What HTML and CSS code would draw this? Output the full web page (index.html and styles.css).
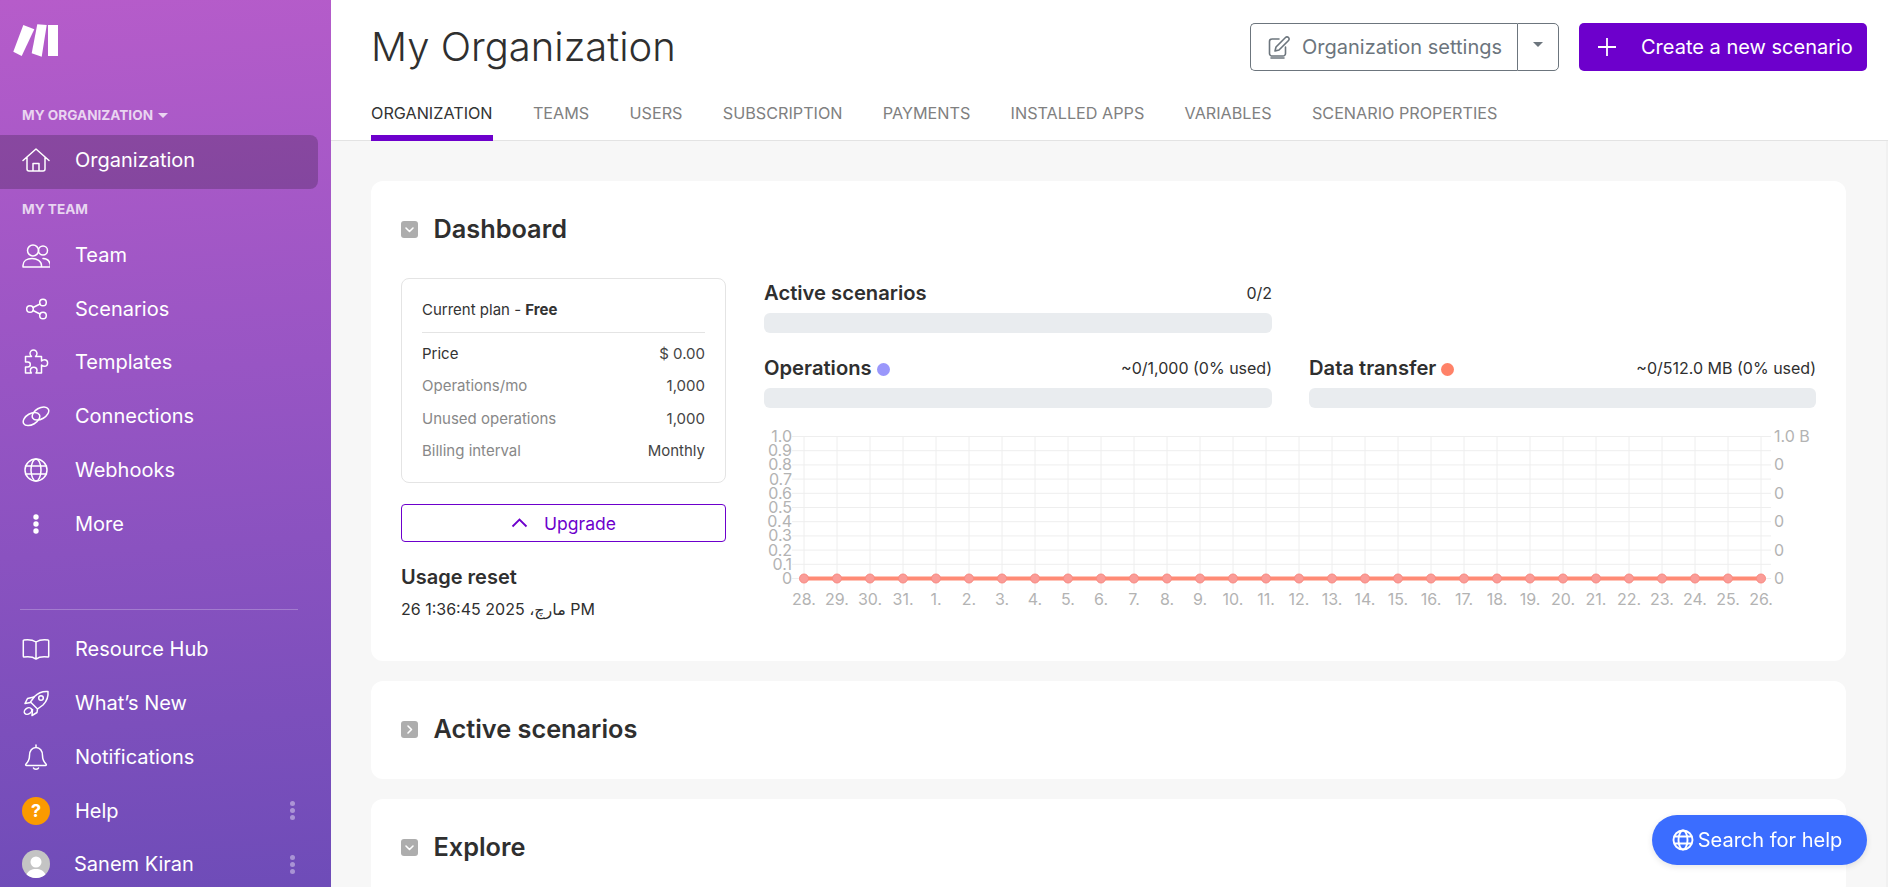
FILE: index.html
```html
<!DOCTYPE html>
<html lang="en">
<head>
  <meta charset="UTF-8" />
  <meta name="viewport" content="width=device-width, initial-scale=1.0"/>
  <title>My Organization</title>
  <link rel="stylesheet" href="styles.css">
</head>
<body>
  <aside class="sidebar">
    <div class="logo">
      <svg width="46" height="34" viewBox="0 0 46 34">
        <polygon points="0.3,27.7 10.3,1 21.3,5.3 8.7,32" />
        <polygon points="18.7,29.3 24.3,0.3 33.7,1 28.7,32.7" />
        <rect x="35" y="1" width="10" height="31" />
      </svg>
    </div>

    <div class="side-label">MY ORGANIZATION <span class="side-caret"></span></div>
    <a class="nav-item active">
      <svg class="nav-icon" viewBox="0 0 28 28"><path d="M1 14.5 14 3l13 11.5M5 11.5V23a2 2 0 0 0 2 2h14a2 2 0 0 0 2-2V11.5M11 25v-7.5h6V25"/></svg>
      <span>Organization</span>
    </a>

    <div class="side-label team-label">MY TEAM</div>
    <a class="nav-item">
      <svg class="nav-icon" viewBox="0 0 28 28"><circle cx="11" cy="9.5" r="5.5"/><circle cx="21" cy="9.5" r="4.5"/><path d="M1 26v-1.5c0-4.5 4-7 9-7s9.5 2.5 9.5 7V26zM21 17.5c4 0 7.3 2.7 7.5 8.5h-9"/></svg>
      <span>Team</span>
    </a>
    <a class="nav-item">
      <svg class="nav-icon" viewBox="0 0 28 28"><circle cx="8" cy="14" r="3.3"/><circle cx="21" cy="7.5" r="3.3"/><circle cx="21" cy="20.5" r="3.3"/><path d="m11 12.5 7-3.500M11 15.5l7 3.500"/></svg>
      <span>Scenarios</span>
    </a>
    <a class="nav-item">
      <svg class="nav-icon" viewBox="0 0 28 28"><path d="M3.5 8.5h6c-1-1-1.5-1.8-1.5-3a3.5 3.5 0 0 1 7 0c0 1.2-.5 2-1.5 3h6v4.5c.8-.8 1.7-1.3 2.8-1.3a3.3 3.3 0 0 1 0 6.6c-1.1 0-2-.5-2.8-1.3v8h-5.5c.8-.8 1-1.5 1-2.4a3.3 3.3 0 0 0-6.6 0c0 .9.3 1.6 1 2.4H3.5v-6h2.3a2.5 2.5 0 0 0 0-5H3.5z"/></svg>
      <span>Templates</span>
    </a>
    <a class="nav-item">
      <svg class="nav-icon" viewBox="0 0 28 28"><ellipse cx="9.5" cy="17" rx="9" ry="5.5" transform="rotate(-30 9.5 17)"/><ellipse cx="18.5" cy="11.5" rx="9" ry="5.5" transform="rotate(-30 18.5 11.5)"/></svg>
      <span>Connections</span>
    </a>
    <a class="nav-item">
      <svg class="nav-icon" viewBox="0 0 28 28"><circle cx="14" cy="14" r="11"/><ellipse cx="14" cy="14" rx="5" ry="11"/><path d="M3.5 10h21M3.5 18h21"/></svg>
      <span>Webhooks</span>
    </a>
    <a class="nav-item">
      <svg class="nav-icon" viewBox="0 0 28 28"><circle class="fill" cx="14" cy="7" r="2.7"/><circle class="fill" cx="14" cy="14" r="2.7"/><circle class="fill" cx="14" cy="21" r="2.7"/></svg>
      <span>More</span>
    </a>

    <div class="side-divider"></div>

    <a class="nav-item">
      <svg class="nav-icon" viewBox="0 0 28 28"><path d="M14 7c-3-2-8-2.5-12-2-.5 0-.7.3-.7.8v15.5c0 .5.3.8.7.8 4-.5 9-.3 12 2 3-2.3 8-2.5 12-2 .4 0 .7-.3.7-.8V5.8c0-.5-.2-.8-.7-.8-4-.5-9 0-12 2zM14 7v17"/></svg>
      <span>Resource Hub</span>
    </a>
    <a class="nav-item">
      <svg class="nav-icon" viewBox="0 0 28 28"><path d="M26 2.5c.5 5-1.5 10-5 13.5l-5.5 4-7-7 4-5.5C16 4 21 2 26 2.5zM15.5 20l-.5 3.5-5 3 .5-6"/><circle cx="19" cy="9" r="2.3"/><ellipse cx="6" cy="22" rx="4" ry="3" transform="rotate(-35 6 22)"/><path d="M12 8 5.5 9.5 3 14.5l5.5-1"/></svg>
      <span>What’s New</span>
    </a>
    <a class="nav-item">
      <svg class="nav-icon" viewBox="0 0 28 28"><path d="M4 21c2-2 3.5-4 3.5-8.5C7.5 8 10 4.5 14 4.5s6.500 3.500 6.500 8c0 4.500 1.500 6.500 3.500 8.500.7.8.3 1.500-.5 1.500h-19c-.8 0-1.200-.7-.5-1.500zM14 2v2.500M11.500 25c.5 1.500 4.500 1.500 5 0"/></svg>
      <span>Notifications</span>
    </a>
    <a class="nav-item">
      <span class="help-badge">?</span>
      <span>Help</span>
      <span class="kebab"><i></i><i></i><i></i></span>
    </a>
    <a class="nav-item">
      <svg class="avatar" viewBox="0 0 28 28"><circle cx="14" cy="14" r="14" fill="#c4c4c4"/><circle cx="14" cy="12" r="5.5" fill="#fff"/><path d="M4.5 24.5c2-4 5-5.5 9.5-5.5s7.5 1.5 9.5 5.5A14 14 0 0 1 14 28a14 14 0 0 1-9.5-3.5z" fill="#fff"/></svg>
      <span>Sanem Kiran</span>
      <span class="kebab"><i></i><i></i><i></i></span>
    </a>
  </aside>

  <div class="main">
    <header class="page-header">
      <div class="header-top">
        <h1>My Organization</h1>
        <div class="header-actions">
          <div class="btn-split">
            <button class="btn-settings">
              <svg width="22" height="24" viewBox="0 0 22 24"><path d="M11 4H4a2.5 2.5 0 0 0-2.5 2.5v12A2.5 2.5 0 0 0 4 21h11a2.5 2.5 0 0 0 2.5-2.5V12M8 12 17.5 2.5a2 2 0 0 1 3 3L11 15l-4 1zM3 23h13"/></svg>
              Organization settings
            </button>
            <button class="btn-caret"><span></span></button>
          </div>
          <button class="btn-create">
            <svg width="18" height="18" viewBox="0 0 18 18"><path d="M9 0v18M0 9h18"/></svg>
            Create a new scenario
          </button>
        </div>
      </div>
      <nav class="tabs">
        <a class="tab active">ORGANIZATION</a>
        <a class="tab">TEAMS</a>
        <a class="tab">USERS</a>
        <a class="tab">SUBSCRIPTION</a>
        <a class="tab">PAYMENTS</a>
        <a class="tab">INSTALLED APPS</a>
        <a class="tab">VARIABLES</a>
        <a class="tab">SCENARIO PROPERTIES</a>
      </nav>
    </header>

    <main class="content">
      <section class="card dashboard-card">
        <div class="card-title">
          <span class="toggle"><svg width="11" height="11" viewBox="0 0 11 11"><path d="m2 4 3.5 3.5L9 4"/></svg></span>
          <h2>Dashboard</h2>
        </div>
        <div class="dashboard">
          <div class="plan-col">
            <div class="plan-box">
              <div class="plan-head">Current plan - <b>Free</b></div>
              <div class="plan-row first"><span>Price</span><span class="val">$ 0.00</span></div>
              <div class="plan-row"><span>Operations/mo</span><span class="val">1,000</span></div>
              <div class="plan-row"><span>Unused operations</span><span class="val">1,000</span></div>
              <div class="plan-row"><span>Billing interval</span><span class="val">Monthly</span></div>
            </div>
            <button class="btn-upgrade">
              <svg width="17" height="10" viewBox="0 0 17 10"><path d="m1.5 8.5 7-7 7 7"/></svg>
              Upgrade
            </button>
            <h3 class="usage-title">Usage reset</h3>
            <p class="usage-date">26 مارچ، 2025 1:36:45 PM</p>
          </div>

          <div class="stats-col">
            <div class="stats">
              <div class="stat">
                <div class="stat-head"><h3>Active scenarios</h3><span>0/2</span></div>
                <div class="bar"></div>
              </div>
              <div></div>
              <div class="stat">
                <div class="stat-head"><h3>Operations <i class="dot dot-ops"></i></h3><span>~0/1,000 (0% used)</span></div>
                <div class="bar"></div>
              </div>
              <div class="stat">
                <div class="stat-head"><h3>Data transfer <i class="dot dot-data"></i></h3><span>~0/512.0 MB (0% used)</span></div>
                <div class="bar"></div>
              </div>
            </div>
            <svg id="chart" class="chart" width="1052" height="190" viewBox="0 0 1052 190"></svg>
          </div>
        </div>
      </section>

      <section class="card">
        <div class="card-title">
          <span class="toggle"><svg width="11" height="11" viewBox="0 0 11 11"><path d="m4 2 3.5 3.5L4 9"/></svg></span>
          <h2>Active scenarios</h2>
        </div>
      </section>

      <section class="card">
        <div class="card-title">
          <span class="toggle"><svg width="11" height="11" viewBox="0 0 11 11"><path d="m2 4 3.5 3.5L9 4"/></svg></span>
          <h2>Explore</h2>
        </div>
      </section>
    </main>
  </div>

  <button class="search-help">
    <svg width="22" height="22" viewBox="0 0 22 22"><circle cx="11" cy="11" r="9.5"/><ellipse cx="11" cy="11" rx="4.5" ry="9.5"/><path d="M2 7.5h18M2 14.5h18"/></svg>
    Search for help
  </button>

  <script>
    const days = [28, 29, 30, 31];
    for (let d = 1; d <= 26; d++) days.push(d);

    const chart = document.getElementById('chart');
    const gridLeft = 40;
    const stepX = 33;
    const gridTop = 11.5;
    const stepY = 14.2;
    const gridRight = gridLeft + stepX * (days.length - 1);
    const gridBottom = gridTop + stepY * 10;

    function add(tag, attrs, text) {
      const el = document.createElementNS('http://www.w3.org/2000/svg', tag);
      for (const key in attrs) el.setAttribute(key, attrs[key]);
      if (text !== undefined) el.textContent = text;
      chart.appendChild(el);
    }

    // Grid and left axis
    for (let i = 0; i <= 10; i++) {
      const y = gridTop + stepY * i;
      add('line', { x1: gridLeft - 12, x2: gridRight + 10, y1: y, y2: y, class: 'grid-line' });
      const label = i === 10 ? '0' : ((10 - i) / 10).toFixed(1);
      add('text', { x: 28, y: y + 5.5, class: 'axis-label', 'text-anchor': 'end' }, label);
    }

    // Right axis
    ['1.0 B', '0', '0', '0', '0', '0'].forEach((label, i) => {
      add('text', { x: gridRight + 13, y: gridTop + stepY * 2 * i + 5.5, class: 'axis-label' }, label);
    });

    // Days
    days.forEach((day, i) => {
      const x = gridLeft + stepX * i;
      add('line', { x1: x, x2: x, y1: gridTop, y2: gridBottom + 12, class: 'grid-line' });
      add('text', { x: x, y: gridBottom + 26, class: 'axis-label', 'text-anchor': 'middle' }, day + '.');
    });

    // Flat series
    add('line', { x1: gridLeft, x2: gridRight, y1: gridBottom, y2: gridBottom, class: 'series-line' });
    days.forEach((_, i) => {
      add('circle', { cx: gridLeft + stepX * i, cy: gridBottom, r: 4.5, class: 'series-dot' });
    });
  </script>
</body>
</html>
```

FILE: styles.css
```css
* {
  box-sizing: border-box;
  padding: 0;
  margin: 0;
}

html,
body {
  height: 100%;
  overflow: hidden;
}

body {
  display: flex;
  font-family: Inter, "DejaVu Sans", sans-serif;
  color: #2f2f2f;
  background-color: #f7f7f7;
}

/* Sidebar */

.sidebar {
  width: 331px;
  flex-shrink: 0;
  height: 100vh;
  overflow: hidden;
  padding-right: 13px;
  color: #fff;
  background: linear-gradient(176deg, #b65cca 0%, #9855c4 42%, #6e4cb8 100%);
}

.logo {
  height: 105px;
  padding: 24px 0 0 13px;
}

.logo svg {
  display: block;
  fill: #fff;
}

.side-label {
  height: 20px;
  padding-left: 22px;
  font-size: 13.6px;
  font-weight: 700;
  line-height: 20px;
  color: rgba(255, 255, 255, 0.75);
}

.side-caret {
  display: inline-block;
  margin-left: 2px;
  vertical-align: 2px;
  border-left: 5px solid transparent;
  border-right: 5px solid transparent;
  border-top: 5px solid rgba(255, 255, 255, 0.75);
}

.team-label {
  height: 41px;
  line-height: 41px;
}

.nav-item {
  display: flex;
  align-items: center;
  height: 53.75px;
  padding: 0 0 4px 22px;
  font-size: 20px;
  color: #fff;
}

.nav-item.active {
  margin-top: 10px;
  height: 54px;
  border-radius: 0 8px 8px 0;
  background-color: rgba(0, 0, 0, 0.2);
}

.nav-icon {
  width: 28px;
  height: 28px;
  margin-right: 25px;
  flex-shrink: 0;
  fill: none;
  stroke: #fff;
  stroke-width: 1.5;
  stroke-linecap: round;
  stroke-linejoin: round;
}

.nav-icon .fill {
  fill: #fff;
  stroke: none;
}

.side-divider {
  height: 1px;
  margin: 56px 20px 15px 20px;
  background-color: rgba(255, 255, 255, 0.25);
}

.help-badge {
  width: 28px;
  height: 28px;
  margin-right: 25px;
  flex-shrink: 0;
  border-radius: 50%;
  background-color: #fb9a00;
  text-align: center;
  font-size: 18px;
  font-weight: 700;
  line-height: 28px;
}

.avatar {
  width: 28px;
  height: 28px;
  margin-right: 24px;
  flex-shrink: 0;
}

.kebab {
  display: flex;
  flex-direction: column;
  gap: 2px;
  margin-left: auto;
  margin-right: 23px;
}

.kebab i {
  width: 5px;
  height: 5px;
  border-radius: 50%;
  background-color: rgba(255, 255, 255, 0.4);
}

/* Header */

.main {
  flex: 1;
  min-width: 0;
  height: 100vh;
  display: flex;
  flex-direction: column;
}

.page-header {
  height: 141px;
  flex-shrink: 0;
  display: flex;
  flex-direction: column;
  padding: 23px 21px 0 40px;
  background-color: #fff;
  border-bottom: 1px solid #e3e3e3;
}

.header-top {
  display: flex;
  justify-content: space-between;
  align-items: flex-start;
}

.page-header h1 {
  font-size: 40px;
  font-weight: 300;
  line-height: 48px;
  color: #2f2f2f;
}

.header-actions {
  display: flex;
  gap: 20px;
}

.header-actions button {
  height: 48px;
  font-family: inherit;
  font-size: 20px;
  cursor: pointer;
}

.btn-split {
  display: flex;
  width: 309px;
}

.btn-settings {
  flex: 1;
  display: flex;
  align-items: center;
  gap: 12px;
  padding-left: 17px;
  color: #6c757d;
  background-color: #fff;
  border: 1px solid #6c757d;
  border-right: none;
  border-radius: 5px 0 0 5px;
}

.btn-settings svg {
  fill: none;
  stroke: #6c757d;
  stroke-width: 1.6;
  stroke-linecap: round;
  stroke-linejoin: round;
}

.btn-caret {
  width: 42px;
  background-color: #fff;
  border: 1px solid #6c757d;
  border-radius: 0 5px 5px 0;
}

.btn-caret span {
  display: block;
  width: 0;
  margin: -5px auto 0;
  border-left: 5px solid transparent;
  border-right: 5px solid transparent;
  border-top: 5px solid #6c757d;
}

.btn-create {
  width: 288px;
  display: flex;
  align-items: center;
  gap: 25px;
  padding-left: 19px;
  color: #fff;
  background-color: #6d00cc;
  border: none;
  border-radius: 5px;
}

.btn-create svg {
  fill: none;
  stroke: #fff;
  stroke-width: 1.8;
}

.tabs {
  display: flex;
  gap: 40.3px;
  margin-top: auto;
  margin-bottom: -1px;
}

.tab {
  padding-bottom: 13px;
  border-bottom: 6px solid transparent;
  font-size: 16.2px;
  line-height: 18px;
  color: #808080;
}

.tab.active {
  color: #333;
  border-bottom-color: #6d00cc;
}

/* Cards */

.content {
  flex: 1;
  min-height: 0;
  overflow: hidden;
  display: flex;
  flex-direction: column;
  gap: 20px;
  padding: 40px 40px 0 40px;
  border-right: 2px solid #f1f1f1;
}

.card {
  flex-shrink: 0;
  padding: 33px 30px 35px;
  background-color: #fff;
  border-radius: 12px;
}

.dashboard-card {
  height: 480px;
}

.card-title {
  display: flex;
  align-items: center;
  gap: 15.5px;
}

.card-title h2 {
  font-size: 25.3px;
  font-weight: 600;
  line-height: 30px;
}

.toggle {
  width: 17px;
  height: 17px;
  display: flex;
  align-items: center;
  justify-content: center;
  border-radius: 3px;
  background-color: #adadad;
}

.toggle svg {
  fill: none;
  stroke: #fff;
  stroke-width: 1.6;
  stroke-linecap: round;
  stroke-linejoin: round;
}

.dashboard {
  display: flex;
  gap: 38px;
  margin-top: 34px;
}

/* Plan column */

.plan-col {
  width: 325px;
  flex-shrink: 0;
}

.plan-box {
  height: 205px;
  padding: 20px 20px 15px;
  border: 1px solid #e4e4e4;
  border-radius: 8px;
  font-size: 15px;
}

.plan-head {
  line-height: 22px;
  padding-bottom: 11px;
  margin-bottom: 5px;
  border-bottom: 1px solid #e4e4e4;
  color: #333;
}

.plan-row {
  display: flex;
  justify-content: space-between;
  height: 32.3px;
  line-height: 32px;
  color: #888;
}

.plan-row.first {
  color: #333;
}

.plan-row .val {
  color: #444;
}

.btn-upgrade {
  width: 100%;
  height: 38px;
  margin-top: 21px;
  display: flex;
  align-items: center;
  justify-content: center;
  gap: 16px;
  font-family: inherit;
  font-size: 17.5px;
  color: #6d00cc;
  background-color: #fff;
  border: 1.5px solid #6d00cc;
  border-radius: 4px;
  cursor: pointer;
}

.btn-upgrade svg {
  fill: none;
  stroke: #6d00cc;
  stroke-width: 1.8;
}

.usage-title {
  margin-top: 21px;
  font-size: 20px;
  font-weight: 600;
  line-height: 28px;
}

.usage-date {
  margin-top: 7px;
  font-size: 16px;
  line-height: 22px;
}

/* Stats and chart */

.stats-col {
  flex: 1;
  min-width: 0;
}

.stats {
  display: grid;
  grid-template-columns: 508px 507px;
  column-gap: 37px;
  row-gap: 20px;
}

.stat-head {
  display: flex;
  justify-content: space-between;
  align-items: center;
  height: 30px;
  margin-bottom: 5px;
  font-size: 16px;
}

.stat-head h3 {
  margin-bottom: 2px;
  font-size: 20.2px;
  font-weight: 600;
}

.dot {
  display: inline-block;
  width: 13px;
  height: 13px;
  border-radius: 50%;
  vertical-align: -1px;
}

.dot-ops {
  background-color: #9a97fb;
}

.dot-data {
  background-color: #ff8268;
}

.bar {
  height: 20px;
  border-radius: 6px;
  background-color: #e9ecef;
}

.chart {
  display: block;
  margin-top: 17px;
}

.grid-line {
  stroke: #eeeeee;
  stroke-width: 1;
}

.axis-label {
  font-size: 16px;
  fill: #b3b3b3;
}

.series-line {
  stroke: #ff8a75;
  stroke-width: 4;
}

.series-dot {
  fill: #fa9c98;
  stroke: #f98a80;
  stroke-width: 1;
}

/* Floating help */

.search-help {
  position: fixed;
  right: 21px;
  bottom: 22px;
  width: 215px;
  height: 50px;
  padding-right: 5px;
  display: flex;
  align-items: center;
  justify-content: center;
  gap: 4px;
  font-family: inherit;
  font-size: 20px;
  color: #fff;
  background-color: #3b6dff;
  border: none;
  border-radius: 25px;
  box-shadow: 0 2px 6px rgba(0, 0, 0, 0.1);
}

.search-help svg {
  fill: none;
  stroke: #fff;
  stroke-width: 1.9;
}
```
